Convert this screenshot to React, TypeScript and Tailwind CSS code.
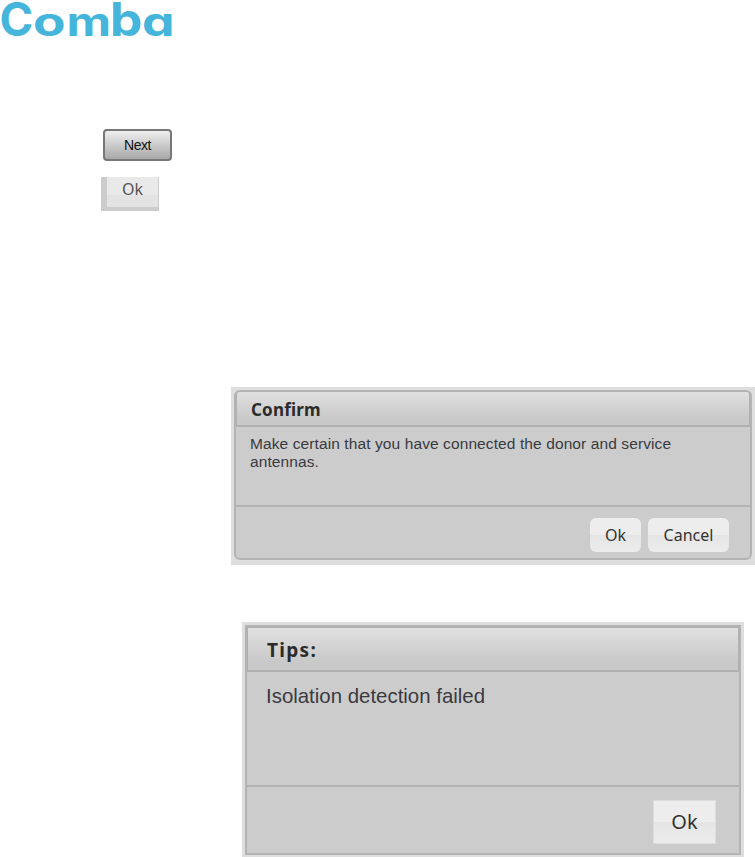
import type { ReactNode } from 'react'
import clsx from 'clsx'

// x is each letter's origin, sx/sy stretch it to the wordmark's proportions
const LOGO_LETTERS = [
    { char: 'C', x: -0.5, sx: 0.97, sy: 0.98 },
    { char: 'o', x: 33, sx: 1.13, sy: 0.84 },
    { char: 'm', x: 66.5, sx: 1.04, sy: 0.84 },
    { char: 'b', x: 110, sx: 1.1, sy: 0.98 },
    { char: 'a', x: 142, sx: 1.1, sy: 0.84 },
]

function Logo() {
    return (
        <svg width="180" height="40" viewBox="0 0 180 40" role="img" aria-label="Comba" className="block overflow-visible">
            {LOGO_LETTERS.map((l) => (
                <text
                    key={l.char}
                    transform={`translate(${l.x} 36) scale(${l.sx} ${l.sy})`}
                    className="fill-[#45b5dc] font-['Inter',sans-serif] text-[47px] font-bold [font-feature-settings:'cv11']"
                >
                    {l.char}
                </text>
            ))}
        </svg>
    )
}

interface DialogProps {
    title: string
    className: string
    frameClass: string
    headerClass: string
    bodyClass: string
    footerClass: string
    message: ReactNode
    children: ReactNode
}

function Dialog({ title, className, frameClass, headerClass, bodyClass, footerClass, message, children }: DialogProps) {
    return (
        <section className={clsx('bg-[#dedede]', className)}>
            <div className={clsx('flex h-full flex-col border-2 border-[#b3b3b3] bg-[#ccc]', frameClass)}>
                <h2
                    className={clsx(
                        "flex items-center border-[#b0b0b0] border-b-2 bg-linear-to-b from-[#e0e0e0] to-[#c9c9c9] to-80% pt-0.5 font-['Noto_Sans',sans-serif] font-bold text-[#2b2b2b]",
                        headerClass,
                    )}
                >
                    {title}
                </h2>
                <div className={clsx("font-['Liberation_Sans',sans-serif] text-[#3a3a3f]", bodyClass)}>{message}</div>
                <div className={clsx('flex flex-1 items-start justify-end border-t-2 border-[#b3b3b3]', footerClass)}>
                    {children}
                </div>
            </div>
        </section>
    )
}

function DialogButton({ className, children }: { className: string; children: ReactNode }) {
    return (
        <button
            className={clsx(
                "bg-linear-to-b from-[#ededed] from-50% via-[#e5e5e5] via-50% to-[#ececec] font-['Noto_Sans',sans-serif] text-[#333]",
                className,
            )}
        >
            {children}
        </button>
    )
}

export default function App() {
    return (
        <main className="flex h-[857px] w-[755px] flex-col overflow-hidden bg-white">
            <header className="h-[128px]">
                <Logo />
            </header>

            {/* Standalone buttons */}
            <div className="flex h-[259px] flex-col items-start pl-[101px]">
                <button className="ml-[2px] mt-px h-[32px] w-[69px] rounded-[4px] border-2 border-[#777] bg-linear-to-b from-[#efefef] to-[#a9a9a9] font-['Liberation_Sans',sans-serif] text-[14px] tracking-[-0.5px] text-[#111]">
                    Next
                </button>
                <div className="mt-4 h-[34px] w-[58px] bg-[#ccc] pl-[6px] pr-px">
                    <button className="flex h-[30px] w-full justify-center bg-linear-to-b from-[#e9e9e9] from-60% to-[#e3e3e3] to-60% font-['Noto_Sans',sans-serif] text-[16px] leading-[24px] text-[#555]">
                        Ok
                    </button>
                </div>
            </div>

            <Dialog
                title="Confirm"
                className="ml-[231px] h-[178px] w-[524px] pt-[3px] pr-[3px] pb-[5px] pl-[3px]"
                frameClass="rounded-md"
                headerClass="h-[35px] rounded-t-[3px] border-l border-r pl-[14px] text-[17px] tracking-[0.2px]"
                bodyClass="h-[78px] pl-[14px] pt-[8px] text-[15.5px] leading-[18px] tracking-[0.1px]"
                footerClass="gap-[7px] pr-[21px] pt-[11px]"
                message={
                    <>
                        Make certain that you have connected the donor and service
                        <br />
                        antennas.
                    </>
                }
            >
                <DialogButton className="h-[34px] w-[51px] rounded-md text-[16px]">Ok</DialogButton>
                <DialogButton className="h-[34px] w-[81px] rounded-md text-[16px]">Cancel</DialogButton>
            </Dialog>

            <Dialog
                title="Tips:"
                className="ml-[242px] mt-[57px] h-[235px] w-[502px] p-[3px] pb-[2px]"
                frameClass=""
                headerClass="h-[45px] border-l border-r border-t pl-[19px] text-[19px] tracking-[1.3px]"
                bodyClass="h-[113px] pl-[19px] pt-[12px] text-[21px] leading-[24px]"
                footerClass="pr-[23px] pt-[13px]"
                message={<span className="inline-block origin-left scale-x-[0.972]">Isolation detection failed</span>}
            >
                <DialogButton className="h-[44px] w-[63px] border border-[#ddd] text-[20px]">Ok</DialogButton>
            </Dialog>
        </main>
    )
}
